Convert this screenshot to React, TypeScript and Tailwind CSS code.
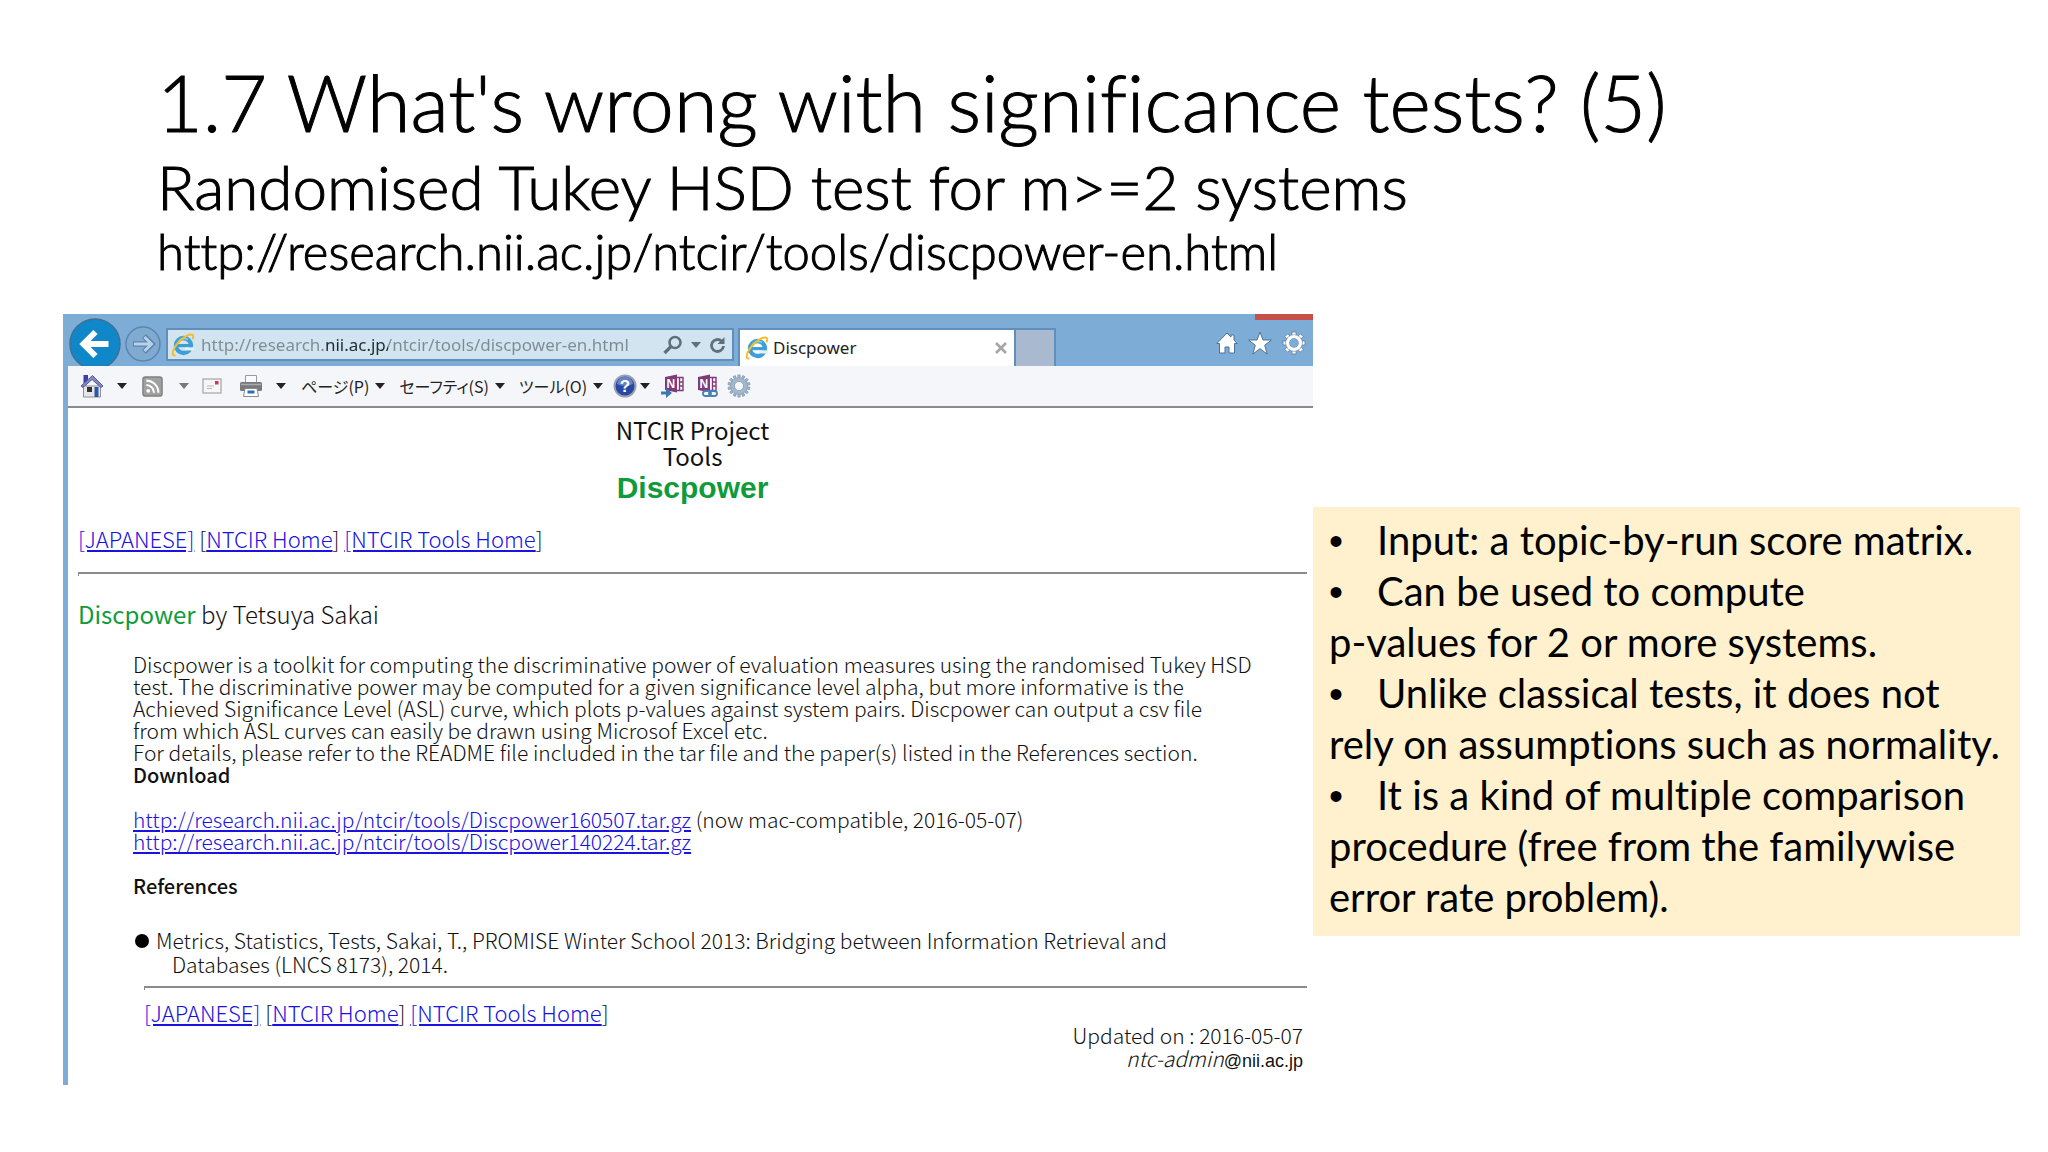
import React from 'react';

const PAGE_FONT = "font-['Noto_Sans_CJK_JP','Liberation_Sans',sans-serif]";

function IeLogo() {
  return (
    <svg viewBox="0 0 24 24" className="size-6 shrink-0" aria-hidden="true">
      <circle cx="12.5" cy="12.5" r="7.5" fill="none" stroke="#3d9fd6" strokeWidth="4.4" />
      <rect x="6" y="11" width="15.5" height="3.2" fill="#3d9fd6" />
      <path d="M14 14.3h9v3.2h-9z" fill="#e4eff6" />
      <path d="M7 9.5a7 7 0 0 1 10-3" fill="none" stroke="#8fd0ee" strokeWidth="1.4" />
      <path
        d="M4.5 22.2C1 23.4.6 19.5 4.2 13.5 8.5 6.5 17.5.2 21.2 1.7c1.4.6 1.3 2.5.3 4.7"
        fill="none"
        stroke="#f3bd2c"
        strokeWidth="2"
      />
    </svg>
  );
}

function Caret({ color = '#222222' }: { color?: string }) {
  return (
    <svg viewBox="0 0 10 6" className="h-[6px] w-[10px] shrink-0" aria-hidden="true">
      <path d="M0 0h10L5 6z" fill={color} />
    </svg>
  );
}

type GearProps = { teeth: number; className: string; fill: string; stroke: string };

function Gear({ teeth, className, fill, stroke }: GearProps) {
  const angles = Array.from({ length: teeth }, (_, i) => (360 / teeth) * i);
  const toothWidth = teeth > 10 ? 2.2 : 4;
  return (
    <svg viewBox="0 0 24 24" className={className} aria-hidden="true">
      {angles.map((angle) => (
        <rect
          key={angle}
          x={12 - toothWidth / 2}
          y="1"
          width={toothWidth}
          height="5"
          fill={fill}
          stroke={stroke}
          strokeWidth=".8"
          transform={`rotate(${angle} 12 12)`}
        />
      ))}
      <circle cx="12" cy="12" r="6.4" fill="none" stroke={stroke} strokeWidth="4.4" />
      <circle cx="12" cy="12" r="6.4" fill="none" stroke={fill} strokeWidth="3.4" />
    </svg>
  );
}

function OneNote({ linked }: { linked?: boolean }) {
  return (
    <svg viewBox="0 0 24 24" className="size-6" aria-hidden="true">
      <path d="M14 3.5h8v13h-8z" fill="#fff" stroke="#80397b" strokeWidth="1.4" />
      <path d="M18.5 3.5v13M18.5 8H22M18.5 12H22" stroke="#80397b" strokeWidth="1.4" />
      <path d="M4 3l12-2.5v18L4 16z" fill="#80397b" />
      <text x="5.5" y="13.8" fontSize="12" fontWeight="700" fill="#fff" fontFamily="Liberation Sans">
        N
      </text>
      {linked ? (
        <g fill="#fff" stroke="#4a7fb5" strokeWidth="1.8">
          <rect x="9" y="17" width="8" height="5" rx="2.5" />
          <rect x="15" y="17" width="8" height="5" rx="2.5" fill="none" />
        </g>
      ) : (
        <path d="M0 17.5h5V14l6 5-6 5v-3.5H0z" fill="#3c78b4" />
      )}
    </svg>
  );
}

function TitleBar() {
  return (
    <div className="flex h-[52px] items-start bg-[#7dadd6]">
      <button type="button" aria-label="Back" className="-mb-2 ml-[1px] mt-[4px] size-[52px] shrink-0">
        <svg viewBox="0 0 52 52" aria-hidden="true">
          <circle cx="26" cy="26" r="25" fill="#0f87c9" stroke="#3f6f97" strokeWidth="1.5" />
          <path d="M39.5 26H15M26.5 14l-12 12 12 12" fill="none" stroke="#fff" strokeWidth="6" />
        </svg>
      </button>
      <button type="button" aria-label="Forward" className="ml-[4px] mt-[12px] size-9 shrink-0">
        <svg viewBox="0 0 36 36" aria-hidden="true">
          <circle cx="18" cy="18" r="17" fill="#80aad0" stroke="#5b86b2" strokeWidth="1.5" />
          <path d="M8 18h18M19 10l8 8-8 8" fill="none" stroke="#5b86b2" strokeWidth="5.5" />
          <path d="M9 18h17M19.5 11l7 7-7 7" fill="none" stroke="#b9d2e8" strokeWidth="3" />
        </svg>
      </button>
      <div className="ml-[5px] mt-[14px] flex h-[33px] w-[568px] items-center border-2 border-[#5f8fba] bg-[#d2e4f0] pl-[3px]">
        <IeLogo />
        <input
          aria-label="Address"
          defaultValue="http://research.nii.ac.jp/ntcir/tools/discpower-en.html"
          className="ml-[6px] w-[450px] bg-[linear-gradient(90deg,#7f8b93_124px,#1f2a33_124px,#1f2a33_187px,#7f8b93_187px)] bg-clip-text font-['Noto_Sans',sans-serif] text-[17px] text-transparent outline-none"
        />
        <div className="ml-auto flex items-center gap-2 pr-[5px]">
          <button type="button" aria-label="Search">
            <svg viewBox="0 0 20 20" className="size-5" aria-hidden="true">
              <circle cx="12" cy="7.5" r="5.5" fill="none" stroke="#5f6f7c" strokeWidth="2.6" />
              <path d="M8 11.5L1.5 18" stroke="#5f6f7c" strokeWidth="3.2" />
            </svg>
          </button>
          <button type="button" aria-label="Show address list">
            <Caret color="#5f6f7c" />
          </button>
          <button type="button" aria-label="Refresh">
            <svg viewBox="0 0 18 18" className="size-[18px]" aria-hidden="true">
              <path d="M12.5 5a6 6 0 1 0 2 5" fill="none" stroke="#5f6f7c" strokeWidth="2.8" />
              <path d="M15.5 1v7h-7z" fill="#5f6f7c" />
            </svg>
          </button>
        </div>
      </div>
      <div className="ml-[4px] mt-[14px] flex h-[38px] w-[278px] items-center border-2 border-b-0 border-[#5f8fba] bg-white pl-[5px]">
        <IeLogo />
        <span className="ml-[4px] font-['Noto_Sans',sans-serif] text-[17px] text-[#222]">Discpower</span>
        <button type="button" aria-label="Close tab" className="ml-auto mr-[7px]">
          <svg viewBox="0 0 12 12" className="size-3" aria-hidden="true">
            <path d="M1 1l10 10M11 1L1 11" stroke="#a5a5a5" strokeWidth="2.6" />
          </svg>
        </button>
      </div>
      <button
        type="button"
        aria-label="New tab"
        className="mt-[14px] h-[38px] w-10 border-r-2 border-t-2 border-[#5f8fba] bg-[#a9b9d0]"
      />
      <div className="ml-auto flex flex-col items-end">
        <div className="h-[6px] w-[58px] bg-[#c8504b]" />
        <div className="mr-[7px] mt-[11px] flex items-center gap-[10px]">
          <button type="button" aria-label="Home">
            <svg viewBox="0 0 22 22" className="size-[22px]" aria-hidden="true">
              <path
                d="M11 1L.8 11.5h2.7V21H9v-6h4v6h5.5v-9.5h2.700L18 8V3h-3v2z"
                fill="#fff"
                stroke="#4f7396"
                strokeWidth="1"
              />
            </svg>
          </button>
          <button type="button" aria-label="Favorites">
            <svg viewBox="0 0 24 24" className="size-6" aria-hidden="true">
              <path
                d="M12 1l3 8h8.500l-6.800 5.200L19.200 23 12 17.700 4.800 23l2.500-8.800L.5 9H9z"
                fill="#fff"
                stroke="#4f7396"
                strokeWidth="1"
              />
            </svg>
          </button>
          <button type="button" aria-label="Settings">
            <Gear teeth={8} className="size-6" fill="#ffffff" stroke="#5a7d9e" />
          </button>
        </div>
      </div>
    </div>
  );
}

function MenuButton({ label }: { label: string }) {
  return (
    <button type="button" className="flex items-center gap-[6px] whitespace-nowrap text-[16px] [font-feature-settings:'palt']">
      {label}
      <Caret />
    </button>
  );
}

function CommandBar() {
  return (
    <div className={`relative flex h-[42px] items-center border-b-2 border-[#8b8b8b] bg-[#f5f6f9] pl-[12px] text-[#222] ${PAGE_FONT}`}>
      <button type="button" aria-label="Home page" className="flex w-[62px] items-center gap-[13px]">
        <svg viewBox="0 0 24 24" className="size-6" aria-hidden="true">
          <path d="M3.5 1H8v8H3.500z" fill="#3a3fae" />
          <path d="M3.5 12h17v11h-17z" fill="#e4e6ea" stroke="#8d9097" />
          <path d="M12.5 1.5L23 12l-2 1.5-9-8-9 8L1 12z" fill="#8488c0" stroke="#55589c" />
          <path d="M7 13h5v5H7z" fill="#333" />
          <path d="M14.5 13h4v10h-4z" fill="#2c58a8" />
        </svg>
        <Caret />
      </button>
      <button type="button" aria-label="Feeds" className="flex w-[60px] items-center gap-[16px]">
        <svg viewBox="0 0 22 22" className="size-[21px]" aria-hidden="true">
          <rect x="1" y="1" width="20" height="20" rx="2.5" fill="#a0a0a0" stroke="#808080" strokeWidth="1.5" />
          <circle cx="6.5" cy="15.5" r="2" fill="#fff" />
          <path d="M4.5 9.5a8 8 0 0 1 8 8M4.5 4.800a12.700 12.700 0 0 1 12.700 12.700" fill="none" stroke="#fff" strokeWidth="2.2" />
        </svg>
        <Caret color="#777777" />
      </button>
      <button type="button" aria-label="Read mail" className="w-[37px]">
        <svg viewBox="0 0 20 16" className="h-4 w-5" aria-hidden="true">
          <rect x="1" y="1" width="18" height="14" fill="#f6f6f6" stroke="#b4b4b4" strokeWidth="1.5" />
          <rect x="13" y="3" width="3.5" height="3.5" fill="#d2345a" />
          <path d="M5 8h7M5 10.500h5" stroke="#b8b8b8" />
        </svg>
      </button>
      <button type="button" aria-label="Print" className="mr-[15px] flex items-center gap-[13px]">
        <svg viewBox="0 0 24 24" className="size-6" aria-hidden="true">
          <path d="M6.5 1.5h11v8h-11z" fill="#fafafa" stroke="#999" />
          <rect x="1" y="8" width="22" height="9" rx="1.5" fill="#77797c" />
          <path d="M2 10.5h20" stroke="#a9abad" strokeWidth="1.5" />
          <path d="M6 14.5h12l1.500 8h-15z" fill="#fff" stroke="#8a8a8a" />
          <path d="M8.5 16.5h7v3h-7z" fill="#2f6fb5" />
        </svg>
        <Caret />
      </button>
      <div className="flex items-center gap-[14px]">
        <MenuButton label="ページ(P)" />
        <MenuButton label="セーフティ(S)" />
        <MenuButton label="ツール(O)" />
        <button type="button" aria-label="Help" className="-ml-1 flex items-center gap-[3px]">
          <svg viewBox="0 0 24 24" className="size-6" aria-hidden="true">
            <circle cx="12" cy="12" r="10.5" fill="#2748a4" stroke="#9aa0ad" strokeWidth="2" />
            <path d="M4 10a8 7.5 0 0 1 16 0q-8 4-16 0z" fill="#6482cc" />
            <text x="12" y="18" textAnchor="middle" fontSize="17" fontWeight="700" fill="#fff" fontFamily="Liberation Sans">
              ?
            </text>
          </svg>
          <Caret />
        </button>
      </div>
      <div className="ml-[11px] flex items-center gap-[9px]">
        <button type="button" aria-label="Send to OneNote">
          <OneNote />
        </button>
        <button type="button" aria-label="OneNote linked notes">
          <OneNote linked />
        </button>
        <button type="button" aria-label="Tools">
          <Gear teeth={14} className="size-6" fill="#a3b8cc" stroke="#8299b0" />
        </button>
      </div>
    </div>
  );
}

function SiteLinks() {
  return (
    <nav className="text-[22px] leading-[24px]">
      <a href="#ja" className="text-[#1a12e0] underline">[JAPANESE]</a>{' '}
      [<a href="#home" className="text-[#1a12e0] underline">NTCIR Home</a>]{' '}
      <a href="#tools" className="text-[#1a12e0] underline">[NTCIR Tools Home</a>]
    </nav>
  );
}

function WebPage() {
  return (
    <div className={`pl-[10px] pr-[6px] pb-3 font-light text-[#111] ${PAGE_FONT}`}>
      <div className="pt-[9px] text-center">
        <p className="text-[24px] leading-[26px] font-normal">NTCIR Project</p>
        <p className="text-[24px] leading-[26px] font-normal">Tools</p>
        <h2 className="font-['Liberation_Sans',sans-serif] text-[30px] leading-[38px] font-bold text-[#0f9b3c]">Discpower</h2>
      </div>
      <div className="pt-[19px]">
        <SiteLinks />
      </div>
      <hr className="mt-[22px] h-1 border-t-2 border-l border-[#8b8b8b]" />
      <p className="mt-[25px] text-[24px] leading-[26px]">
        <span className="font-normal text-[#0f9b3c]">Discpower</span> by Tetsuya Sakai
      </p>
      <div className="ml-[55px] mt-[26px] text-[21px] leading-[22px]">
        <p>
          Discpower is a toolkit for computing the discriminative power of evaluation measures using the randomised Tukey HSD
          <br />
          test. The discriminative power may be computed for a given significance level alpha, but more informative is the
          <br />
          Achieved Significance Level (ASL) curve, which plots p-values against system pairs. Discpower can output a csv file
          <br />
          from which ASL curves can easily be drawn using Microsof Excel etc.
          <br />
          For details, please refer to the README file included in the tar file and the paper(s) listed in the References section.
        </p>
        <h3 className="mt-[1px] text-[20px] leading-[22px] font-medium">Download</h3>
        <p className="mt-[22px]">
          <a href="#160507" className="text-[#1a12e0] underline">
            http://research.nii.ac.jp/ntcir/tools/Discpower160507.tar.gz
          </a>{' '}
          (now mac-compatible, 2016-05-07)
          <br />
          <a href="#140224" className="text-[#1a12e0] underline">
            http://research.nii.ac.jp/ntcir/tools/Discpower140224.tar.gz
          </a>
        </p>
        <h3 className="mt-[23px] text-[20px] leading-[22px] font-medium">References</h3>
        <ul className="mt-[31px] leading-[24px]">
          <li className="flex">
            <span className="ml-[2px] mt-[6px] size-[14px] shrink-0 rounded-full bg-black" />
            <span className="ml-[23px] -indent-4">
              Metrics, Statistics, Tests, Sakai, T., PROMISE Winter School 2013: Bridging between Information Retrieval and
              <br />
              Databases (LNCS 8173), 2014.
            </span>
          </li>
        </ul>
      </div>
      <div className="ml-[66px]">
        <hr className="mt-[10px] mb-[10px] h-1 border-t-2 border-l border-[#8b8b8b]" />
        <SiteLinks />
      </div>
      <div className="pr-[4px] text-right text-[21px] leading-[23px]">
        <p>Updated on : 2016-05-07</p>
        <address>
          ntc-admin<span className="font-['Liberation_Sans',sans-serif] text-[18px] font-normal not-italic">@nii.ac.jp</span>
        </address>
      </div>
    </div>
  );
}

function Bullet() {
  return <span className="inline-block w-12 font-['Liberation_Sans',sans-serif] leading-none">•</span>;
}

function Notes() {
  return (
    <ul className="mt-[193px] self-start bg-[#fff1ce] pt-[8px] pb-[13px] pl-4 font-['Lato',sans-serif] text-[40px] leading-[51px] whitespace-nowrap text-black [font-variant-ligatures:none]">
      <li>
        <Bullet />
        Input: a topic-by-run score matrix.
      </li>
      <li>
        <Bullet />
        Can be used to compute
        <br />
        p-values for 2 or more systems.
      </li>
      <li>
        <Bullet />
        Unlike classical tests, it does not
        <br />
        rely on assumptions such as normality.
      </li>
      <li>
        <Bullet />
        It is a kind of multiple comparison
        <br />
        procedure (free from the familywise
        <br />
        error rate problem).
      </li>
    </ul>
  );
}

function App() {
  return (
    <main className="min-h-screen bg-white">
      <header className="pl-[157px] pt-[58px] font-['Lato',sans-serif] font-light whitespace-nowrap text-black [font-variant-ligatures:none] [-webkit-text-stroke:1px_black]">
        <h1 className="text-[79px] leading-[88px]">1.7 What's wrong with significance tests? (5)</h1>
        <p className="text-[62px] leading-[81px]">Randomised Tukey HSD test for m&gt;=2 systems</p>
        <p className="text-[49px] leading-[49px]">http://research.nii.ac.jp/ntcir/tools/discpower-en.html</p>
      </header>
      <div className="ml-[63px] mr-[28px] mt-[38px] grid grid-cols-[1250fr_707fr]">
        <section className="min-w-0 border-l-[5px] border-[#7dadd6]">
          <TitleBar />
          <CommandBar />
          <WebPage />
        </section>
        <Notes />
      </div>
    </main>
  );
}

export default App;
